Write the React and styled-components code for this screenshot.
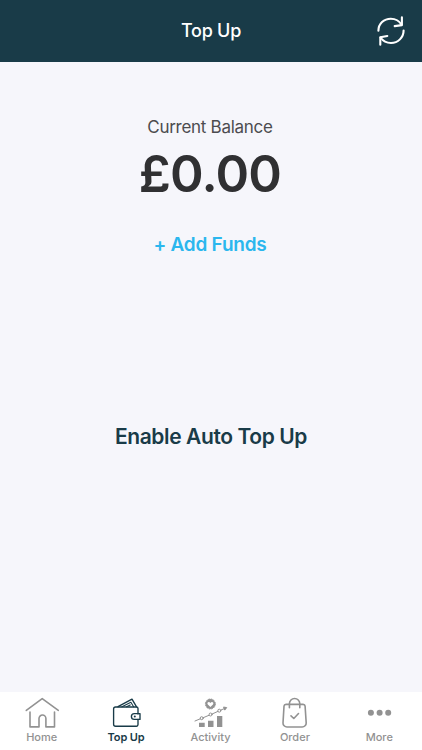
import React from "react";
import styled, { createGlobalStyle } from "styled-components";

const Global = createGlobalStyle`
  *, *::before, *::after { box-sizing: border-box; }
  body { margin: 0; background: #f6f6fb; font-family: Inter, "Liberation Sans", sans-serif; }
  button { font: inherit; border: 0; background: none; padding: 0; margin: 0; }
`;

const Screen = styled.div`
  display: flex;
  flex-direction: column;
  width: 100%;
  height: 750px;
  overflow: hidden;
  background: #f6f6fb;
`;

const Header = styled.header`
  display: grid;
  grid-template-columns: 62px 1fr 62px;
  align-items: center;
  flex: none;
  height: 62px;
  background: #193b48;
  color: #fff;
`;

const Title = styled.h1`
  grid-column: 2;
  margin: 0;
  text-align: center;
  font-size: 18px;
  line-height: 24px;
  font-weight: 500;
  letter-spacing: -0.25px;
`;

const RefreshButton = styled.button`
  display: flex;
  justify-content: center;
  color: #fff;
`;

const Main = styled.main`
  display: flex;
  flex-direction: column;
  align-items: center;
  flex: 1;
  min-height: 0;
  padding: 54px 2px 0 0;
`;

const BalanceLabel = styled.div`
  font-size: 17px;
  line-height: 22px;
  color: #4c4c4f;
  letter-spacing: -0.28px;
`;

const Amount = styled.div`
  margin-top: 6px;
  font-size: 51px;
  line-height: 60px;
  font-weight: 600;
  letter-spacing: -0.8px;
  color: #303032;
`;

const AddFunds = styled.button`
  margin-top: 29px;
  font-size: 19px;
  line-height: 24px;
  font-weight: 600;
  letter-spacing: -0.25px;
  color: #2bb7ee;
`;

const AutoTopUp = styled.button`
  margin: 166px -2px 0 0;
  font-size: 21px;
  line-height: 28px;
  font-weight: 600;
  letter-spacing: -0.4px;
  color: #193b48;
`;

const TabBar = styled.nav`
  display: grid;
  grid-template-columns: repeat(5, 1fr);
  flex: none;
  height: 58px;
  background: #fff;
`;

const Tab = styled.button`
  display: flex;
  flex-direction: column;
  align-items: center;
  padding-top: 3px;
  color: ${(p) => (p.$active ? "#193b48" : "#929292")};
`;

const TabLabel = styled.span`
  margin: 1px 1px 0 0;
  font-size: 11px;
  line-height: 14px;
  font-weight: ${(p) => (p.$active ? 600 : 500)};
  letter-spacing: ${(p) => (p.$active ? "-0.1px" : "0")};
`;

const Icon = styled.svg`
  display: block;
  flex: none;
  fill: none;
  stroke: currentColor;
  stroke-width: ${(p) => p.$weight || 1.4};
  stroke-linecap: round;
  stroke-linejoin: round;
`;

const Refresh = () => (
  <Icon width="32" height="34" viewBox="0 0 32 34" $weight={2.1}>
    <path d="M3.4 16.8C3.4 9.7 9 4.7 15.8 4.7c4.6 0 8.6 2.4 10.8 6" />
    <path d="M26.9 3.2v7.9l-7.2 1" />
    <path d="M28.6 16.5c0 7-5.6 12.5-12.6 12.5-4.3 0-8.2-2.2-10.5-5.5" />
    <path d="M5.3 30.7v-7.5l7-1.2" />
  </Icon>
);

const TabIcon = ({ children, weight }) => (
  <Icon width="44" height="34" viewBox="0 0 44 34" $weight={weight}>{children}</Icon>
);

const HomeIcon = () => (
  <TabIcon weight={1.6}>
    <path d="M6.3 15.4 22.2 3.6l16.1 11.8" />
    <path d="M10 17v14.9h9V23.5a3.45 3.45 0 0 1 6.9 0v8.4h8.6V17" />
  </TabIcon>
);

const WalletIcon = () => (
  <TabIcon weight={1.35}>
    <path d="M33 18.9v-5.3a1.6 1.6 0 0 0-1.6-1.6H10.6a2 2 0 0 0-2 2v15.2a2 2 0 0 0 2 2h20.8a1.6 1.6 0 0 0 1.6-1.6v-5.3" />
    <path d="M35 18.6h-5.7a2.9 2.9 0 0 0 0 5.8H35z" />
    <path d="m13 11.7 14-7.5 4.4 7.5" />
    <path d="m17 11.7 8.9-4.5 2.7 4.5M21.6 11.7l3.6-1.8" strokeWidth="1.1" />
    <circle cx="29.8" cy="21.5" r="1" fill="currentColor" stroke="none" />
  </TabIcon>
);

const ActivityIcon = () => (
  <TabIcon weight={1}>
    <circle cx="21.4" cy="9" r="4.9" fill="currentColor" stroke="none" />
    <circle cx="21.4" cy="9" r="5" strokeDasharray="1.6 1" strokeLinecap="butt" />
    <path d="m21.4 12-2.6-2.6c-1.3-1.5.9-3.4 2.6-1.5 1.7-1.9 3.9 0 2.6 1.5z" fill="#fff" stroke="none" />
    <path d="m6 26 5.3-2.2M14.2 22.7l6-2.5M23.1 19l5.8-2.6M31.7 15.1l5-2" />
    <circle cx="12.7" cy="23.2" r="1.5" />
    <circle cx="21.6" cy="19.5" r="1.5" />
    <circle cx="30.3" cy="15.7" r="1.5" />
    <path d="m34.9 12.1 2.8.5-1.7 2.2z" fill="currentColor" />
    <path d="M10 27.7h5.7V32H10zM19 25.7h5.5V32H19zM28 21h5.3v11H28z" fill="currentColor" stroke="none" />
  </TabIcon>
);

const OrderIcon = () => (
  <TabIcon weight={1.6}>
    <path d="M13 9.4h17.1a2 2 0 0 1 2 1.8l1.1 16.7a4 4 0 0 1-4 4.1H14a4 4 0 0 1-4-4.1l1-16.7a2 2 0 0 1 2-1.8z" />
    <path d="M16.4 12.8V8.7a5.2 5.2 0 0 1 10.4 0v4.1" />
    <path d="m18 20.8 2.8 2.7 4.7-5" />
  </TabIcon>
);

const MoreIcon = () => (
  <TabIcon>
    <g fill="currentColor" stroke="none">
      <circle cx="12.9" cy="17.8" r="3" />
      <circle cx="21.6" cy="17.8" r="3" />
      <circle cx="30.2" cy="17.8" r="3" />
    </g>
  </TabIcon>
);

const tabs = [
  { label: "Home", Glyph: HomeIcon },
  { label: "Top Up", Glyph: WalletIcon, active: true },
  { label: "Activity", Glyph: ActivityIcon },
  { label: "Order", Glyph: OrderIcon },
  { label: "More", Glyph: MoreIcon },
];

export default function App() {
  return (
    <>
      <Global />
      <Screen>
        <Header>
          <Title>Top Up</Title>
          <RefreshButton aria-label="Refresh"><Refresh /></RefreshButton>
        </Header>
        <Main>
          <BalanceLabel>Current Balance</BalanceLabel>
          <Amount>£0.00</Amount>
          <AddFunds>+ Add Funds</AddFunds>
          <AutoTopUp>Enable Auto Top Up</AutoTopUp>
        </Main>
        <TabBar>
          {tabs.map(({ label, Glyph, active }) => (
            <Tab key={label} $active={active}>
              <Glyph />
              <TabLabel $active={active}>{label}</TabLabel>
            </Tab>
          ))}
        </TabBar>
      </Screen>
    </>
  );
}
